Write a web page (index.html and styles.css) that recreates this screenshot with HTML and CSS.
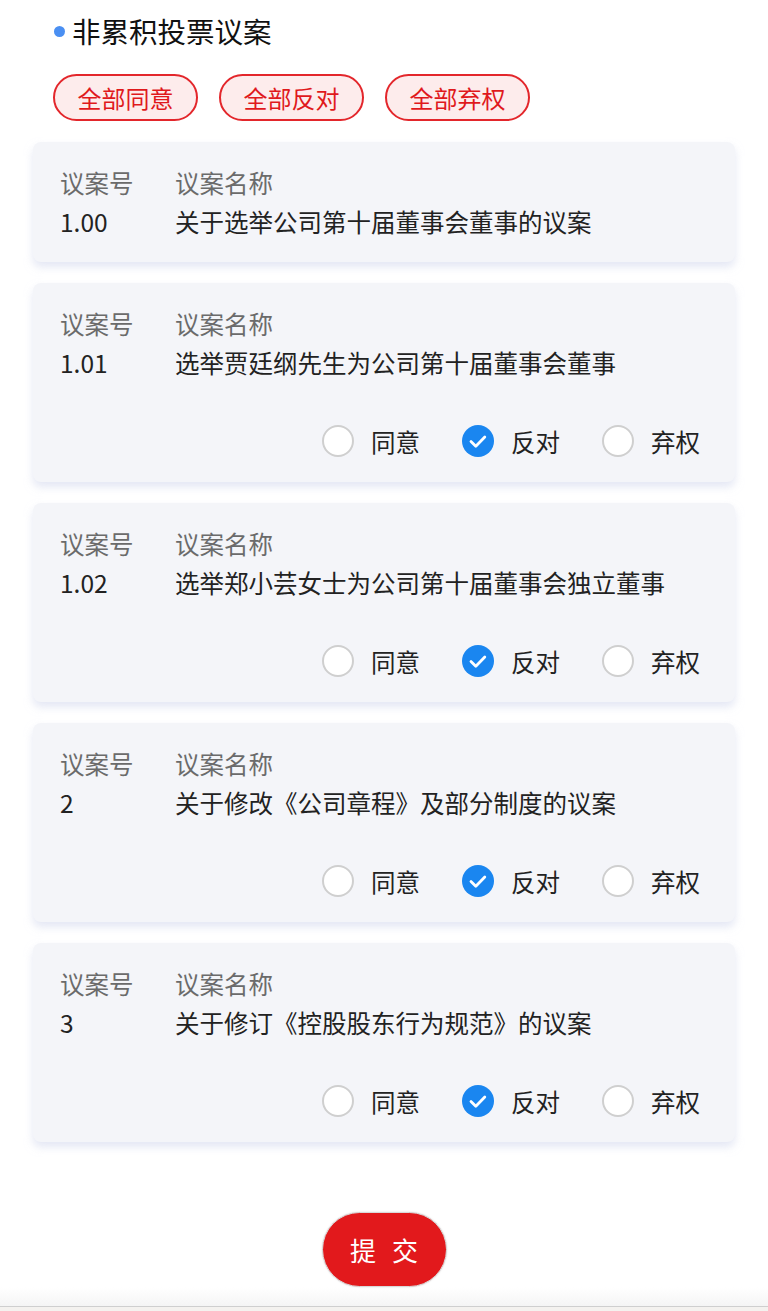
FILE: index.html
```html
<!DOCTYPE html>
<html lang="zh">
<head>
<meta charset="utf-8">
<link rel="stylesheet" href="styles.css">
</head>
<body>
<div class="page">
  <div class="title"><span class="dot"></span>非累积投票议案</div>
  <div class="actions">
    <button class="pill">全部同意</button>
    <button class="pill">全部反对</button>
    <button class="pill">全部弃权</button>
  </div>
  <div class="cards">
    <div class="card">
      <div class="row label"><span class="c1">议案号</span><span>议案名称</span></div>
      <div class="row value"><span class="c1">1.00</span><span>关于选举公司第十届董事会董事的议案</span></div>
    </div>
    <div class="card">
      <div class="row label"><span class="c1">议案号</span><span>议案名称</span></div>
      <div class="row value"><span class="c1">1.01</span><span>选举贾廷纲先生为公司第十届董事会董事</span></div>
      <div class="opts">
        <div class="opt"><span class="radio"></span>同意</div>
        <div class="opt"><span class="radio on"><svg viewBox="0 0 32 32" width="32" height="32"><path d="M9 16.5l4.8 4.8 9-9.3" fill="none" stroke="#fff" stroke-width="2.8" stroke-linecap="round" stroke-linejoin="round"/></svg></span>反对</div>
        <div class="opt"><span class="radio"></span>弃权</div>
      </div>
    </div>
    <div class="card">
      <div class="row label"><span class="c1">议案号</span><span>议案名称</span></div>
      <div class="row value"><span class="c1">1.02</span><span>选举郑小芸女士为公司第十届董事会独立董事</span></div>
      <div class="opts">
        <div class="opt"><span class="radio"></span>同意</div>
        <div class="opt"><span class="radio on"><svg viewBox="0 0 32 32" width="32" height="32"><path d="M9 16.5l4.8 4.8 9-9.3" fill="none" stroke="#fff" stroke-width="2.8" stroke-linecap="round" stroke-linejoin="round"/></svg></span>反对</div>
        <div class="opt"><span class="radio"></span>弃权</div>
      </div>
    </div>
    <div class="card">
      <div class="row label"><span class="c1">议案号</span><span>议案名称</span></div>
      <div class="row value"><span class="c1">2</span><span>关于修改《公司章程》及部分制度的议案</span></div>
      <div class="opts">
        <div class="opt"><span class="radio"></span>同意</div>
        <div class="opt"><span class="radio on"><svg viewBox="0 0 32 32" width="32" height="32"><path d="M9 16.5l4.8 4.8 9-9.3" fill="none" stroke="#fff" stroke-width="2.8" stroke-linecap="round" stroke-linejoin="round"/></svg></span>反对</div>
        <div class="opt"><span class="radio"></span>弃权</div>
      </div>
    </div>
    <div class="card">
      <div class="row label"><span class="c1">议案号</span><span>议案名称</span></div>
      <div class="row value"><span class="c1">3</span><span>关于修订《控股股东行为规范》的议案</span></div>
      <div class="opts">
        <div class="opt"><span class="radio"></span>同意</div>
        <div class="opt"><span class="radio on"><svg viewBox="0 0 32 32" width="32" height="32"><path d="M9 16.5l4.8 4.8 9-9.3" fill="none" stroke="#fff" stroke-width="2.8" stroke-linecap="round" stroke-linejoin="round"/></svg></span>反对</div>
        <div class="opt"><span class="radio"></span>弃权</div>
      </div>
    </div>
  </div>
  <div class="submit-wrap"><button class="submit">提 交</button></div>
</div>
<div class="footer"></div>
<div class="bar"></div>
</body>
</html>
```

FILE: styles.css
```css
* { box-sizing: border-box; }
html, body { margin: 0; padding: 0; background: #fff; }
body {
  font-family: "Noto Sans CJK SC", "Noto Sans", sans-serif;
  color: #222;
  width: 768px;
  overflow: hidden;
}
.page { padding: 0 33px; }
.title {
  display: flex;
  align-items: center;
  gap: 7px;
  margin-left: 21px;
  padding-top: 11px;
  height: 51px;
  line-height: 40px;
  font-size: 28.5px;
  color: #111;
}
.dot {
  width: 11px;
  height: 11px;
  border-radius: 50%;
  background: #4a8ff2;
  flex: none;
}
.actions {
  display: flex;
  gap: 21px;
  margin-top: 23px;
  padding-left: 20px;
}
.pill {
  width: 145px;
  height: 47px;
  border: 2px solid #e3262b;
  border-radius: 24px;
  background: #fdecec;
  color: #e0191c;
  font-family: inherit;
  font-size: 24px;
  padding: 0;
  line-height: 43px;
}
.cards {
  display: flex;
  flex-direction: column;
  gap: 21px;
  margin-top: 21px;
}
.card {
  background: #f4f5f9;
  border-radius: 8px;
  padding: 21px 35px 21px 27px;
  box-shadow: 0 5px 8px rgba(205, 212, 235, 0.55);
}
.row {
  display: flex;
  font-size: 24.5px;
  line-height: 39px;
}
.row .c1 { width: 115px; flex: none; }
.label { color: #6b6b6b; }
.value { color: #222; }
.opts {
  display: flex;
  justify-content: flex-end;
  gap: 42px;
  margin-top: 39px;
  height: 40px;
  align-items: center;
}
.opt {
  display: flex;
  align-items: center;
  gap: 17px;
  font-size: 24.5px;
  color: #222;
}
.radio {
  width: 32px;
  height: 32px;
  border-radius: 50%;
  border: 2px solid #cfcfcf;
  background: #fff;
  flex: none;
  display: block;
}
.radio.on {
  border: none;
  background: #1a86f0;
}
.radio svg { display: block; }
.submit-wrap {
  display: flex;
  justify-content: center;
  margin-top: 70px;
}
.submit {
  width: 125px;
  height: 75px;
  border-radius: 38px;
  border: 1px solid #d9d9d9;
  background: #e2191c;
  color: #fff;
  font-family: inherit;
  font-size: 26px;
  letter-spacing: 5px;
  padding: 0 0 0 5px;
  box-shadow: 0 0 2px rgba(0,0,0,0.15);
}
.footer {
  height: 19px;
  background: linear-gradient(#fff, #f5f5f5);
}
.bar {
  height: 5px;
  border-top: 1px solid #cfcfcf;
  background: #f4f2ef;
}
```
